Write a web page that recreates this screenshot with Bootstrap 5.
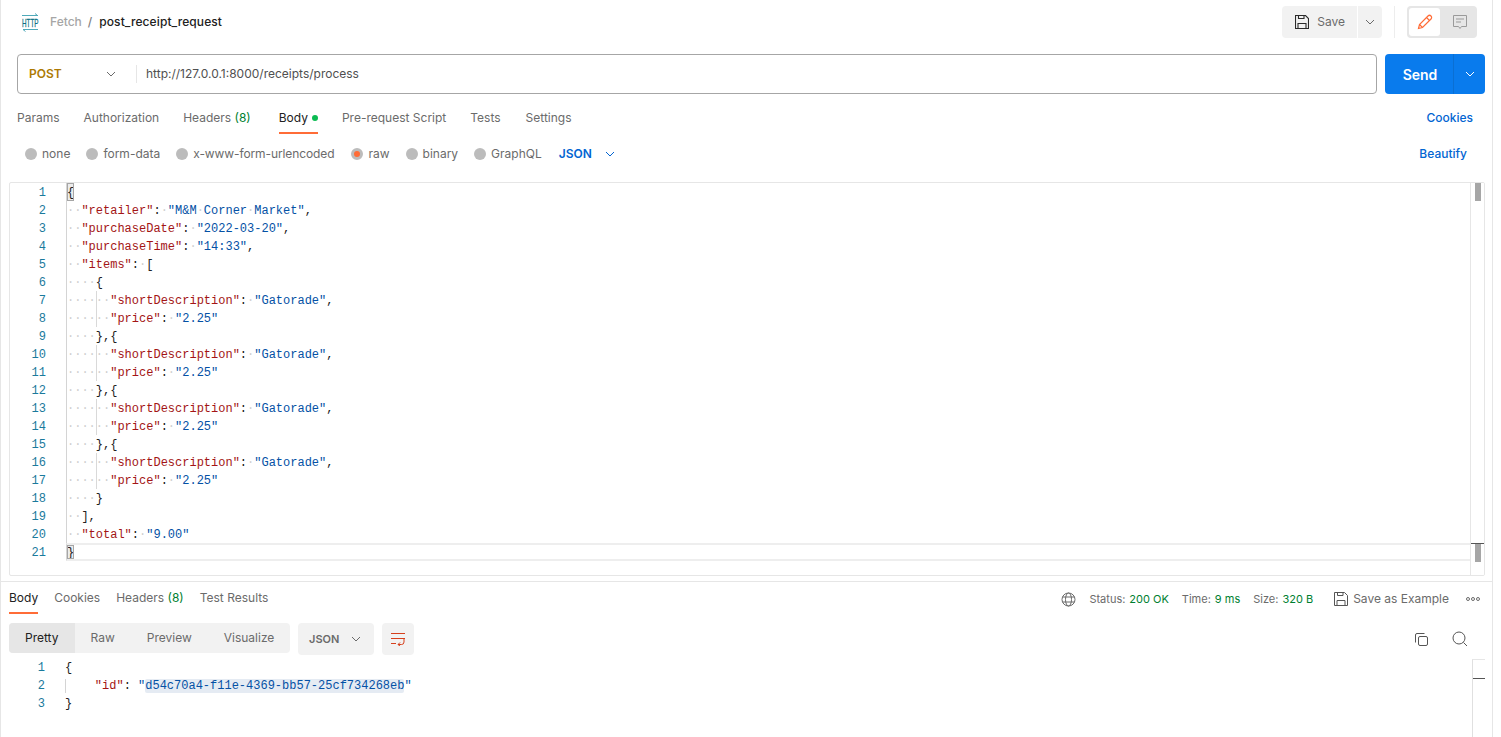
<!DOCTYPE html>
<html lang="en"><head><meta charset="utf-8"><title>post_receipt_request</title>
<link href="https://cdn.jsdelivr.net/npm/bootstrap@5.3.0/dist/css/bootstrap.min.css" rel="stylesheet">
<style>
html,body{height:737px;overflow:hidden;background:#fff}
body{font-family:Inter,"Liberation Sans",sans-serif;font-size:12px;color:#6b6b6b}
.pm-app{width:1493px;height:737px;border-left:1px solid #e6e6e6;border-right:1px solid #e6e6e6;display:flex;flex-direction:column}
.pm-head{height:54px;padding:6px 15px 0 20px}
.pm-crumb{font-size:12px;height:32px;font-weight:500}
.pm-crumb .pm-fetch{color:#a6a6a6;margin-left:11px}
.pm-crumb .pm-sep{color:#808080;margin:0 7px 0 6px}
.pm-crumb .pm-name{color:#212121;letter-spacing:.1px}
.pm-save{height:32px;background:#f2f2f2;border:0;color:#6b6b6b;font-size:12px;padding:0 12px 0 13px;border-radius:4px 0 0 4px;gap:8px;margin-right:1px}
.pm-savec{height:32px;width:24px;background:#f2f2f2;border:0;padding:0;border-radius:0 4px 4px 0}
.pm-vr{width:1px;height:32px;background:#ededed;margin:0 12px}
.pm-toggle{background:#e6e6e6;border-radius:4px;padding:2px;height:32px;width:70px}
.pm-toggle span{width:32px;height:28px;border-radius:3px}
.pm-toggle .pm-on{background:#fff}
.pm-url{padding:0 7px 0 16px;height:40px;gap:8px}
.pm-urlbox{flex:1;height:40px;border:1px solid #a6a6a6;border-radius:4px;background:#fff}
.pm-method{width:118px;padding:0 20px 0 11px;font-weight:600;color:#ad7a03;font-size:12px}
.pm-urltext{border-left:1px solid #e6e6e6;height:18px;padding-left:9px;line-height:18px;font-size:12px;color:#505050}
.pm-send{width:100px;height:40px;background:#097bed;border-radius:4px;color:#fff;font-weight:600;font-size:14px}
.pm-send b{flex:1;text-align:center;font-weight:600;padding-left:2px}
.pm-send i{width:32px;height:40px;border-left:1px solid #0a6fd3;display:flex;align-items:center;justify-content:center}
.pm-tabs{height:48px;padding:12px 19px 0 16px;gap:24px}
.pm-tab{height:28px;line-height:24px;color:#6b6b6b;display:block}
.pm-tab.pm-act{color:#212121;border-bottom:2px solid #ff6c37;margin-left:4px}
.pm-tab.pm-last{margin-left:1px}
.pm-dot{display:inline-block;width:6px;height:6px;border-radius:50%;background:#0cbb52;margin-left:4px;vertical-align:1px}
.pm-g{color:#007f31}
.pm-link{color:#0265d2;font-weight:500}
.pm-opts{height:24px;padding:0 25px 0 24px}
.pm-opt{display:flex;align-items:center;gap:5px;margin-right:16px;color:#6b6b6b}
.pm-opt.pm-tight{margin-right:17px;letter-spacing:-.1px}
.pm-opt.pm-lastopt{margin-right:17px}
.pm-radio{width:12px;height:12px;border-radius:50%;background:#bcbcbc}
.pm-radio.pm-sel{background:#ff6c37;border:3px solid #bcbcbc}
.pm-chev{gap:13px}
.pm-editor{margin:16px 7px 0 8px;height:394px;border:1px solid #e6e6e6;border-radius:2px;position:relative;overflow:hidden}
.pm-code{font-family:"Liberation Mono",monospace;font-size:12px;line-height:18px;color:#212121}
.pm-line{display:flex;height:18px;white-space:pre}
.pm-editor .pm-line{line-height:20px}
.pm-num{width:36px;text-align:right;color:#1a7a9c;flex:none}
.pm-src{margin-left:20px;border-left:1px solid #d4d4d4;flex:1;min-width:0}
.pm-ws{color:#cfcfcf}.pm-k{color:#a31515}.pm-s{color:#0451a5}
.pm-guide{background:linear-gradient(#d9d9d9,#d9d9d9) 28.8px 0/1px 100% no-repeat}
.pm-brk{background:#ececec;outline:1px solid #a6a6a6;outline-offset:-1px;display:inline-block;height:18px}
.pm-cur{border-top:2px solid #eee;border-bottom:2px solid #eee;height:18px;line-height:16px}
.pm-cur .pm-brk{height:14px;line-height:16px}
.pm-rail{position:absolute;right:0;top:0;bottom:0;width:14px;border-left:1px solid #e6e6e6;background:#fff}
.pm-thumb{position:absolute;left:4px;width:6px;background:#a6a6a6;height:18px;top:0}
.pm-thumb.pm-low{top:361px}
.pm-tick{position:absolute;left:0;right:0;height:1px;background:#555;top:360px}
.pm-tick.pm-rtick{top:18px}
.pm-split{height:1px;background:#e6e6e6;margin-top:5px}
.pm-rhead{height:32px;padding:0 12px 0 8px;margin-top:1px}
.pm-rtabs{gap:16px;height:32px}
.pm-rtab{height:31px;line-height:30px;color:#6b6b6b}
.pm-rtab.pm-act{color:#212121;border-bottom:2px solid #ff6c37}
.pm-meta{gap:4px;font-size:11px}
.pm-meta .pm-g{margin-right:9px}
.pm-meta .pm-g.pm-endg{margin-right:17px}
.pm-globe{margin-right:9px}
.pm-asex{font-size:12px;margin-left:1px;margin-right:13px}
.pm-tools{padding:0 8px;margin-top:8px;height:32px}
.pm-seg{background:#f2f2f2;height:30px;border-radius:4px;width:281px}
.pm-seg span{padding:0 16px;line-height:30px;color:#6b6b6b}
.pm-seg .pm-on{background:#e6e6e6;color:#212121;border-radius:4px 0 0 4px}
.pm-json{width:76px;height:32px;margin-left:8px;background:#f2f2f2;border-radius:4px;font-weight:600;font-size:11px;padding:0 13px 0 11px}
.pm-wrap{width:32px;height:32px;margin-left:8px;background:#f2f2f2;border-radius:4px}
.pm-icons{gap:23px;margin-right:16px}
.pm-resp{position:relative;flex:1;margin-top:4px;padding-left:8px;overflow:hidden}
.pm-resp .pm-src{border-left:0}
.pm-rg{border-left:1px solid #d4d4d4}
.pm-hl{background:#e5ebf3;border-radius:2px}
.pm-rrail{position:absolute;right:7px;top:0;bottom:0;width:13px;border-left:1px solid #e0e0e0;border-top:1px solid #e6e6e6}
</style></head>
<body>
<div class="pm-app">
  <div class="pm-head d-flex justify-content-between align-items-start">
    <div class="pm-crumb d-flex align-items-center">
      <svg width="18" height="20" viewBox="0 0 18 20" fill="none"><path d="M1 3.500h16M14 1.500l2.500 2" stroke="#4fa9b9"/><path d="M17 17.500H2M4.500 19.500L2 17.500" stroke="#4fa9b9"/><text transform="translate(1 14.500) scale(.6 1)" font-family="Liberation Sans" font-size="10.500" fill="#0b6f84" stroke="#0b6f84" stroke-width=".25">HTTP</text></svg>
      <span class="pm-fetch">Fetch</span><span class="pm-sep">/</span><span class="pm-name">post_receipt_request</span>
    </div>
    <div class="d-flex align-items-center">
      <button class="btn pm-save d-flex align-items-center">
        <svg width="14" height="14" viewBox="0 0 14 14" fill="none" stroke="#2b2b2b" stroke-width="1.100"><path d="M.5.500h10l3 3v10H.5z"/><path d="M3.500.500v3h5.500v-3M3 13.500v-5h8v5"/></svg>Save</button>
      <button class="btn pm-savec d-flex align-items-center justify-content-center"><svg width="10" height="10" viewBox="0 0 10 10" fill="none" stroke="#6b6b6b"><path d="M1 3l4 4 4-4"/></svg></button>
      <div class="pm-vr"></div>
      <div class="pm-toggle d-flex">
        <span class="pm-on d-flex align-items-center justify-content-center"><svg width="16" height="16" viewBox="0 0 16 16" fill="none" stroke="#ff6c37" stroke-width="1.200"><path d="M1.500 14.500l1-4L11 2a1.500 1.500 0 0 1 3 3l-8.500 8.500z"/><path d="M9.500 3.500l3 3M2.500 10.500l3 3"/></svg></span>
        <span class="d-flex align-items-center justify-content-center ms-1"><svg width="16" height="16" viewBox="0 0 16 16" fill="none" stroke="#9a9a9a"><path d="M1.500 1.500h13v11h-5l-1.500 2-1.500-2h-5z"/><path d="M4 5h8M4 8h5"/></svg></span>
      </div>
    </div>
  </div>

  <div class="pm-url d-flex">
    <div class="pm-urlbox d-flex align-items-center">
      <div class="pm-method d-flex align-items-center justify-content-between"><span>POST</span><svg width="10" height="10" viewBox="0 0 10 10" fill="none" stroke="#6b6b6b"><path d="M1 3l4 4 4-4"/></svg></div>
      <div class="pm-urltext">http://127.0.0.1:8000/receipts/process</div>
    </div>
    <div class="pm-send d-flex align-items-center"><b>Send</b><i><svg width="10" height="10" viewBox="0 0 10 10" fill="none" stroke="#fff"><path d="M1 3l4 4 4-4"/></svg></i></div>
  </div>

  <div class="pm-tabs d-flex align-items-start">
    <span class="pm-tab">Params</span><span class="pm-tab">Authorization</span><span class="pm-tab">Headers <span class="pm-g">(8)</span></span>
    <span class="pm-tab pm-act">Body<span class="pm-dot"></span></span>
    <span class="pm-tab">Pre-request Script</span><span class="pm-tab">Tests</span><span class="pm-tab pm-last">Settings</span>
    <span class="pm-tab pm-link ms-auto">Cookies</span>
  </div>

  <div class="pm-opts d-flex align-items-center">
    <label class="pm-opt"><span class="pm-radio"></span>none</label>
    <label class="pm-opt"><span class="pm-radio"></span>form-data</label>
    <label class="pm-opt pm-tight"><span class="pm-radio"></span>x-www-form-urlencoded</label>
    <label class="pm-opt"><span class="pm-radio pm-sel"></span>raw</label>
    <label class="pm-opt"><span class="pm-radio"></span>binary</label>
    <label class="pm-opt pm-lastopt"><span class="pm-radio"></span>GraphQL</label>
    <span class="pm-link pm-chev d-flex align-items-center fw-semibold">JSON <svg width="10" height="10" viewBox="0 0 10 10" fill="none" stroke="#0265d2"><path d="M1 3l4 4 4-4"/></svg></span>
    <span class="pm-link ms-auto">Beautify</span>
  </div>

  <div class="pm-editor">
    <div class="pm-code" id="req"></div>
    <div class="pm-rail"><div class="pm-thumb"></div><div class="pm-tick"></div><div class="pm-thumb pm-low"></div></div>
  </div>

  <div class="pm-split"></div>
  <div class="pm-rhead d-flex justify-content-between align-items-center">
    <div class="pm-rtabs d-flex"><span class="pm-rtab pm-act">Body</span><span class="pm-rtab">Cookies</span><span class="pm-rtab">Headers <span class="pm-g">(8)</span></span><span class="pm-rtab">Test Results</span></div>
    <div class="pm-meta d-flex align-items-center">
      <svg width="15" height="15" viewBox="0 0 15 15" fill="none" stroke="#6b6b6b" class="pm-globe"><circle cx="7.500" cy="7.500" r="6.500"/><ellipse cx="7.500" cy="7.500" rx="3" ry="6.500"/><path d="M1.500 5h12M1.500 10h12"/></svg>
      <span>Status:</span><span class="pm-g">200 OK</span><span>Time:</span><span class="pm-g">9 ms</span><span>Size:</span><span class="pm-g pm-endg">320 B</span>
      <svg width="14" height="14" viewBox="0 0 14 14" fill="none" stroke="#555"><path d="M.5.500h10l3 3v10H.5z"/><path d="M3.500.500v3h5.500v-3M3 13.500v-5h8v5"/></svg>
      <span class="pm-asex">Save as Example</span>
      <svg width="14" height="6" viewBox="0 0 14 6" fill="none" stroke="#6b6b6b"><circle cx="2" cy="3" r="1.500"/><circle cx="7" cy="3" r="1.500"/><circle cx="12" cy="3" r="1.500"/></svg>
    </div>
  </div>

  <div class="pm-tools d-flex align-items-center">
    <div class="pm-seg d-flex align-self-start"><span class="pm-on">Pretty</span><span>Raw</span><span>Preview</span><span>Visualize</span></div>
    <div class="pm-json d-flex align-items-center justify-content-between"><span>JSON</span><svg width="10" height="10" viewBox="0 0 10 10" fill="none" stroke="#6b6b6b"><path d="M1 3l4 4 4-4"/></svg></div>
    <div class="pm-wrap d-flex align-items-center justify-content-center"><svg width="14" height="14" viewBox="0 0 14 14" fill="none" stroke="#d6401d"><path d="M0 1.500h14M0 6.500h14M0 11.500h5M13 6.500v3.500a2.500 2.500 0 0 1-2.500 2.500H7M9 10.500l-2 2 2 1.500"/></svg></div>
    <div class="ms-auto d-flex align-items-center pm-icons">
      <svg width="15" height="15" viewBox="0 0 15 15" fill="none" stroke="#555"><rect x="4.500" y="4.500" width="9" height="9" rx="1.500"/><path d="M10.500 1.500H3a1.500 1.500 0 0 0-1.500 1.500v7.500"/></svg>
      <svg width="16" height="16" viewBox="0 0 16 16" fill="none" stroke="#555"><circle cx="7" cy="7" r="6"/><path d="M11.500 11.500l3.500 3.500"/></svg>
    </div>
  </div>

  <div class="pm-resp">
    <div class="pm-code" id="res"></div>
    <div class="pm-rrail"><div class="pm-tick pm-rtick"></div></div>
  </div>
</div>
<script>
var d='<span class="pm-ws">·</span>';
function ws(n){return d.repeat(n);}
function k(t){return '<span class="pm-k">"'+t+'"</span>:'+d;}
function s(t){return '<span class="pm-s">"'+t+'"</span>';}
var item=[
 [ws(6)+k('shortDescription')+s('Gatorade')+',',1],
 [ws(6)+k('price')+s('2.25'),1]];
var L=[['<span class="pm-brk">{</span>'],
 [ws(2)+k('retailer')+s('M&amp;M'+d+'Corner'+d+'Market')+','],
 [ws(2)+k('purchaseDate')+s('2022-03-20')+','],
 [ws(2)+k('purchaseTime')+s('14:33')+','],
 [ws(2)+k('items')+'['],
 [ws(4)+'{']].concat(item,[[ws(4)+'},{']],item,[[ws(4)+'},{']],item,[[ws(4)+'},{']],item,[
 [ws(4)+'}'],[ws(2)+'],'],[ws(2)+k('total')+s('9.00')],['<span class="pm-brk">}</span>']]);
document.getElementById('req').innerHTML=L.map(function(l,i){
 return '<div class="pm-line"><span class="pm-num">'+(i+1)+'</span><span class="pm-src'+(l[1]?' pm-guide':'')+(i==20?' pm-cur':'')+'">'+l[0]+'</span></div>';}).join('');
document.getElementById('res').innerHTML=
'<div class="pm-line"><span class="pm-num">1</span><span class="pm-src">{</span></div>'+
'<div class="pm-line"><span class="pm-num">2</span><span class="pm-src"><span class="pm-rg">    </span><span class="pm-k">"id"</span>: <span class="pm-s">"<span class="pm-hl">d54c70a4-f11e-4369-bb57-25cf734268eb</span>"</span></span></div>'+
'<div class="pm-line"><span class="pm-num">3</span><span class="pm-src">}</span></div>';
</script>
<script src="https://cdn.jsdelivr.net/npm/bootstrap@5.3.0/dist/js/bootstrap.bundle.min.js"></script>
</body></html>
